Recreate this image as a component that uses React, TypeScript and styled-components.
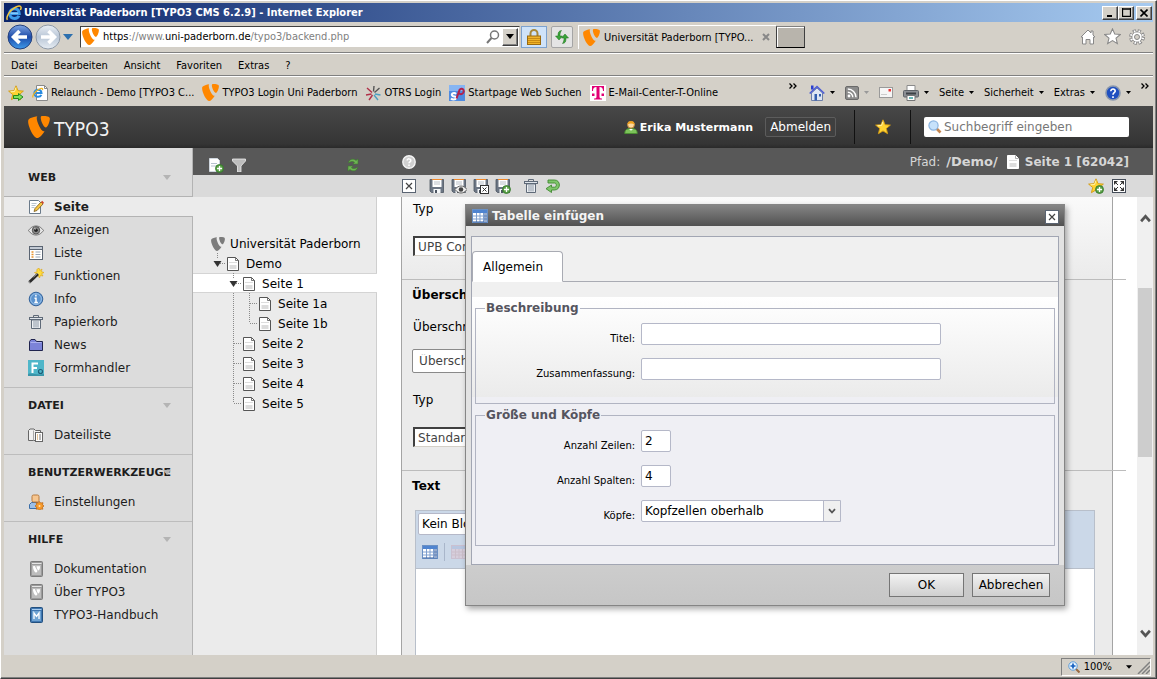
import React from "react";
import styled, { createGlobalStyle, css } from "styled-components";

const ui = `"DejaVu Sans Condensed", "DejaVu Sans", sans-serif`;
const page = `"DejaVu Sans", sans-serif`;

const Global = createGlobalStyle`
  *, *::before, *::after { box-sizing: border-box; }
  body { margin: 0; background: #d4d0c8; font-family: ${page}; font-size: 12px; color: #000; }
  button, input, select { font: inherit; color: inherit; margin: 0; }
  a { color: inherit; text-decoration: none; }
  ul { list-style: none; margin: 0; padding: 0; }
  h1, h2, h3 { margin: 0; font-size: inherit; }
  svg { display: block; flex: none; }
`;

/* ---------- icons ---------- */

const svg = (vb: string, w: number, h: number, body: React.ReactNode) => (
  <svg width={w} height={h} viewBox={vb} fill="none" aria-hidden="true">
    {body}
  </svg>
);

const Typo3Mark = ({ size = 18, color = "#ff8700" }: { size?: number; color?: string }) =>
  svg("0 0 24 24", size, size, (
    <g fill={color}>
      <path d="M18.080 16.539c-.356.105-.64.144-1.012.144-3.048 0-7.524-10.652-7.524-14.197 0-1.305.31-1.740.745-2.114C6.560.808 2.082 2.177.651 3.917c-.31.436-.497 1.120-.497 1.990C.154 11.442 6.060 24 10.228 24c1.928 0 5.178-3.168 7.852-7.460" />
      <path d="M16.134 0c3.855 0 7.713.622 7.713 2.798 0 4.415-2.800 9.765-4.230 9.765-2.549 0-5.720-7.090-5.720-10.635C13.897.31 14.518 0 16.134 0" />
    </g>
  ));

const IeIcon = () =>
  svg("0 0 16 16", 16, 16, (
    <>
      <path d="M4 8.500h9.200C13 5.600 11 3.800 8.500 3.800S3.700 5.700 3.700 8.600s2 4.900 4.800 4.900c2.100 0 3.700-1 4.400-2.700" stroke="#3d9be8" strokeWidth="3" />
      <path d="M4.500 8.200h7.600" stroke="#a8dcff" strokeWidth="1" />
      <path d="M1.500 14.800C-.5 12.500 3.500 5.500 9 2.500c3-1.700 5.600-1.900 6-.4.200.7 0 1.700-.6 2.900" stroke="#f2c53d" strokeWidth="1.500" />
    </>
  ));

const IePage = () =>
  svg("0 0 16 16", 16, 16, (
    <>
      <path d="M4.500.5h8l3 3v12h-11z" fill="#fff" stroke="#8a8a8a" />
      <path d="M12.500.5v3h3" stroke="#8a8a8a" />
      <path d="M2.500 8h7C9.300 6 8 4.800 6 4.800S2.300 6.200 2.300 8.200 4 11.800 6 11.800c1.600 0 2.800-.7 3.300-2" stroke="#2a8be0" strokeWidth="2" />
      <path d="M1 12.500C0 11 3 6.500 6.500 4.500s4.500-1.200 4 .6" stroke="#f2b51d" strokeWidth="1.200" />
    </>
  ));

const NavBubble = ({ back }: { back?: boolean }) =>
  svg("0 0 26 26", 26, 26, (
    <>
      <defs>
        <linearGradient id={back ? "nb" : "nf"} x1="0" y1="0" x2="0" y2="1">
          <stop offset="0" stopColor={back ? "#7fa6e4" : "#e9eef4"} />
          <stop offset=".5" stopColor={back ? "#1d4aa8" : "#b9c6d6"} />
          <stop offset="1" stopColor={back ? "#3f9bea" : "#e7edf3"} />
        </linearGradient>
      </defs>
      <circle cx="13" cy="13" r="12" fill={`url(#${back ? "nb" : "nf"})`} stroke={back ? "#24407c" : "#8f9aa8"} />
      <path
        d={back ? "M12.500 7L6.500 13l6 6M7.500 13H20" : "M13.500 7l6 6-6 6M18.500 13H6"}
        stroke="#fff"
        strokeWidth="3.600"
      />
    </>
  ));

const Caret = ({ color = "#000", w = 5 }: { color?: string; w?: number }) =>
  svg("0 0 10 6", w, Math.round(w * 0.6), <path d="M0 0h10L5 6z" fill={color} />);

const Magnifier = () =>
  svg("0 0 14 14", 14, 14, (
    <>
      <circle cx="8.500" cy="5" r="4" stroke="#777" strokeWidth="1.500" />
      <path d="M5.500 8L1 13" stroke="#777" strokeWidth="2" />
    </>
  ));

const Lock = () =>
  svg("0 0 16 16", 16, 16, (
    <>
      <path d="M4.500 8V4.500a3.500 3.500 0 017 0V8" stroke="#a8883a" strokeWidth="2" />
      <rect x="1.500" y="7" width="13" height="8.500" fill="#f0b429" stroke="#9a6a10" />
      <path d="M2 9.500h12M2 11.500h12M2 13.500h12" stroke="#c98a14" />
    </>
  ));

const ReloadArrows = () =>
  svg("0 0 16 16", 16, 16, (
    <g fill="#3aa53a" stroke="#1d6f1d" strokeWidth=".5">
      <path d="M7.500 1.500C4.500 2 4 3.500 4 7H1.500L5 11l3.500-4H6C6 4.500 6.200 3.500 7.500 1.500z" />
      <path d="M8.500 14.500C11.500 14 12 12.500 12 9h2.500L11 5 7.500 9H10c0 2.500-.2 3.500-1.500 5.500z" />
    </g>
  ));

const House = () =>
  svg("0 0 16 16", 16, 16, (
    <path d="M8 1L1 8h1.500v7H6v-4.500h4V15h3.500V8H15l-2-2V2h-2v2z" fill="#fff" stroke="#888" />
  ));
const starPath = "M8 .8l2.100 4.900 5.300.4-4.100 3.400 1.300 5.200L8 11.900l-4.600 2.800 1.300-5.200L.6 6.100l5.300-.4z";
const StarOutline = () => svg("0 0 16 16", 17, 17, <path d={starPath} fill="#fff" stroke="#888" />);
const Star = ({ add, arrow }: { add?: boolean; arrow?: boolean }) =>
  svg("0 0 16 16", 16, 16, (
    <>
      <path d={starPath} fill="#ffd332" stroke="#d39a12" strokeWidth=".9" />
      <path d="M8 2.500L6.500 6.500l-4 .3" stroke="#fff3b0" />
      {add && <AddBadge />}
      {arrow && <path d="M5.500 10.500h5V8.500L15 12l-4.500 3.500v-2h-5z" fill="#7fe05a" stroke="#238a1b" />}
    </>
  ));
const Gear = () =>
  svg("0 0 16 16", 16, 16, (
    <>
      <circle cx="8" cy="8" r="6.300" stroke="#888" strokeWidth="3.200" strokeDasharray="3.100 1.850" />
      <circle cx="8" cy="8" r="5.200" fill="#fff" stroke="#888" />
      <circle cx="8" cy="8" r="6" stroke="#fff" strokeWidth="2.200" strokeDasharray="1.500 3.220" strokeDashoffset="-.8" />
      <circle cx="8" cy="8" r="2.500" fill="#d4d0c8" stroke="#888" />
    </>
  ));
const AddBadge = () => (
  <>
    <circle cx="11.500" cy="11.500" r="4" fill="#5aa046" stroke="#2f7326" strokeWidth=".8" />
    <path d="M11.500 9v5M9 11.500h5" stroke="#fff" strokeWidth="1.300" />
  </>
);

const Otrs = () =>
  svg("0 0 16 16", 16, 16, (
    <g strokeWidth="1.400">
      <path d="M7 7.500L2 3M6.500 9L1 10M7.500 10L4 15" stroke="#b03048" />
      <path d="M8.500 6.500l.5-5.500M9.500 7.500L14.500 3" stroke="#555" />
      <path d="M10 9l5.500 1M9 10l4 5" stroke="#4b9fc0" />
    </g>
  ));
const Startpage = () =>
  svg("0 0 16 16", 16, 16, (
    <>
      <rect width="16" height="16" fill="#4f8be0" />
      <rect width="16" height="6" fill="#86b5f3" />
      <path d="M7 9C5.500 7.300 2 8.300 3 10.300s4.500.5 4 2.700-4 1.500-5 .5" stroke="#fff" strokeWidth="2" />
      <path d="M7.500 13.500L10.500 5c2.500-3 5.500 0 3.500 3-1.200 1.600-3.500 1.500-4 0" stroke="#b3224b" strokeWidth="2" />
    </>
  ));
const Telekom = () =>
  svg("0 0 16 16", 16, 16, (
    <>
      <rect width="16" height="16" fill="#fff" />
      <path d="M2 1h12v5h-1c0-2.500-1-4-3.500-4v9.500c0 1.500.5 2 2.500 2v1H4v-1c2 0 2.500-.5 2.500-2V2C4 2 3 3.500 3 6H2z" fill="#e20074" />
      <path d="M2 8.500h2.500V11H2zM11.500 8.500H14V11h-2.500z" fill="#e20074" />
    </>
  ));
const HomeBlue = () =>
  svg("0 0 16 16", 16, 16, (
    <>
      <path d="M2.500 8v7.500h11V8L8 3z" fill="#dfe6f3" stroke="#6d7fa8" />
      <path d="M.7 8.500L8 1.500l7.300 7" stroke="#4a5bd6" strokeWidth="1.600" />
      <path d="M2 .5h2.500v4H2z" fill="#2a3fd0" />
      <path d="M5.500 9H8v6.500H5.500z" fill="#355fae" />
      <path d="M10 9h2v2.500h-2z" fill="#355fae" />
    </>
  ));
const Rss = () =>
  svg("0 0 14 14", 14, 14, (
    <>
      <rect x=".5" y=".5" width="13" height="13" rx="1.500" fill="#8b8b8b" stroke="#6a6a6a" />
      <circle cx="4" cy="10" r="1.400" fill="#fff" />
      <path d="M2.800 6.200a5 5 0 015 5M2.800 3a8.200 8.200 0 018.200 8.200" stroke="#fff" strokeWidth="1.400" />
    </>
  ));
const Mail = () =>
  svg("0 0 14 11", 14, 11, (
    <>
      <rect x=".5" y=".5" width="13" height="10" fill="#f6f6f6" stroke="#9a9a9a" />
      <rect x="9.500" y="2" width="2.500" height="2.500" fill="#e33" />
      <path d="M2 7.500h6" stroke="#ccc" />
    </>
  ));
const Printer = () =>
  svg("0 0 16 16", 16, 16, (
    <>
      <path d="M4 .5h8V7H4z" fill="#fff" stroke="#8b8b8b" />
      <rect x=".5" y="5.500" width="15" height="6.500" rx="1" fill="#8c8f94" stroke="#5e6268" />
      <path d="M3 8.500h10" stroke="#3c4046" strokeWidth="2" />
      <path d="M4 10.500h8v5H4z" fill="#fff" stroke="#777" />
      <path d="M6 13h4" stroke="#3aa0a0" strokeWidth="1.500" />
    </>
  ));
const HelpBlue = () =>
  svg("0 0 16 16", 16, 16, (
    <>
      <circle cx="8" cy="8" r="7" fill="#1f4fc0" stroke="#8a97ad" strokeWidth="1.600" />
      <path d="M5.800 6.200c0-3 4.600-2.800 4.400 0C10 7.700 8 7.800 8 9.800M8 11.300v1.600" stroke="#fff" strokeWidth="1.600" />
    </>
  ));
const HelpGrey = () =>
  svg("0 0 14 14", 14, 14, (
    <>
      <circle cx="7" cy="7" r="6.200" fill="#cfcfcf" stroke="#f4f4f4" strokeWidth="1.400" />
      <path d="M5.200 5.600c0-2.400 3.700-2.200 3.600 0C8.700 6.800 7 6.900 7 8.300M7 9.600v1.300" stroke="#fff" strokeWidth="1.500" />
    </>
  ));
const User = () =>
  svg("0 0 14 14", 14, 14, (
    <>
      <path d="M.8 13.500c0-3.500 1.700-5 6.200-5s6.200 1.500 6.200 5z" fill="#7cc35a" stroke="#4c8f33" />
      <path d="M5 9l2 1.800L9 9z" fill="#fff" />
      <circle cx="7" cy="4.700" r="3.400" fill="#ffd9a0" stroke="#c98a3a" />
      <path d="M3.500 4.500C3 0 11 0 10.500 4.500 8.500 3 5.500 3 3.500 4.500z" fill="#f0a11c" />
    </>
  ));
const SearchColor = () =>
  svg("0 0 14 14", 14, 14, (
    <>
      <path d="M8.500 8.500l4 4" stroke="#c48650" strokeWidth="2.600" />
      <circle cx="5.500" cy="5.500" r="4.600" fill="#c7e2fb" stroke="#8bb4e0" strokeWidth="1.200" />
    </>
  ));
const ZoomIn = () =>
  svg("0 0 12 12", 12, 12, (
    <>
      <path d="M7.500 7.500l4 4" stroke="#9a6a40" strokeWidth="2" />
      <circle cx="5" cy="5" r="4.200" fill="#e8f4ff" stroke="#5b9bd8" />
      <path d="M5 2.500v5M2.500 5h5" stroke="#1560c0" strokeWidth="1.700" />
    </>
  ));

const PageSheet = ({ plain, edge = "#555" }: { plain?: boolean; edge?: string }) =>
  svg("0 0 12 14", 12, 14, (
    <>
      <path d="M.5.5h8l3 3v10H.5z" fill="#fff" stroke={plain ? "#fff" : edge} />
      <path d="M8.500.5v3h3" stroke={edge} strokeWidth=".8" />
      <path d="M2.500 5.500h7" stroke="#bbb" strokeDasharray="1 1" />
      <path d="M2.500 8h7v4h-7z" fill="#dcdcdc" />
    </>
  ));
const EditPage = () =>
  svg("0 0 16 16", 16, 16, (
    <>
      <path d="M1.500 1.500h9l2 2v11h-11z" fill="#fff" stroke="#6a7a8a" />
      <path d="M3.500 4.500h5M3.500 6.500h4M3.500 8.500h3" stroke="#b8c4d0" />
      <path d="M6 12.500l1-3 6-6.500 2 2-6 6.500z" fill="#f7c542" stroke="#7a5a1a" strokeWidth=".8" />
      <path d="M13 3l1.200-1.300 1.800 2L15 5z" fill="#d2452d" />
    </>
  ));
const Eye = () =>
  svg("0 0 16 16", 16, 16, (
    <>
      <path d="M.5 8.500C3 5 5.500 4 8 4s5 1 7.500 4.500C13 12 10.500 13 8 13S3 12 .5 8.500z" fill="#e6e6e6" stroke="#707070" />
      <circle cx="8" cy="8.300" r="3.700" fill="#8a8a8a" stroke="#555" />
      <circle cx="8" cy="8.300" r="1.800" fill="#222" />
      <path d="M6.500 6.200l1.200 1" stroke="#fff" />
    </>
  ));
const ListIcon = () =>
  svg("0 0 16 16", 16, 16, (
    <>
      <rect x="1.500" y="1.500" width="13" height="13" fill="#fff" stroke="#5a6472" />
      <path d="M2 3h12" stroke="#c3cad4" strokeWidth="2" />
      <path d="M2 4.500h12" stroke="#5a6472" />
      <path d="M3.500 7h2M3.500 9.500h2M3.500 12h2" stroke="#e8922e" strokeWidth="1.500" />
      <path d="M7.500 7h5M7.500 9.500h5M7.500 12h5" stroke="#9aa6b6" />
    </>
  ));
const Wand = () =>
  svg("0 0 16 16", 16, 16, (
    <>
      <path d="M11 0l.8 2.500L14 1l-.6 2.600L16 4.500l-2.400 1.200L15 8l-2.600-.5L11.500 10l-1.300-2.300L8 8.500l.6-2.500L6.500 4.500 9 4 8.800 1.500z" fill="#ffdc3c" stroke="#d9a318" strokeWidth=".6" />
      <path d="M10 6L1 14.500" stroke="#2b2b2b" strokeWidth="2.800" />
      <path d="M9.500 5.500l-4 3.700" stroke="#aaa" strokeWidth=".8" />
      <path d="M2 14.700L.7 13.300" stroke="#eee" />
    </>
  ));
const Info = () =>
  svg("0 0 16 16", 16, 16, (
    <>
      <circle cx="8" cy="8" r="6.800" fill="#5b93cf" stroke="#34639b" />
      <circle cx="8" cy="8" r="5.400" stroke="#a9cbee" strokeWidth=".8" />
      <path d="M6.500 7.200H8v4M6.300 11.500h3.600M7.900 3.800v1.700" stroke="#fff" strokeWidth="1.500" />
    </>
  ));
const Trash = () =>
  svg("0 0 16 16", 16, 16, (
    <>
      <path d="M5.500 3V1.500h5V3" stroke="#5f6a78" />
      <rect x="1.500" y="3.500" width="13" height="2" fill="#dfe4ea" stroke="#5f6a78" />
      <path d="M3.500 6h9v8.500h-9z" fill="#eef1f4" stroke="#5f6a78" />
      <path d="M6 7v6.500M8 7v6.500M10 7v6.500" stroke="#8c97a5" />
    </>
  ));
const Folder = () =>
  svg("0 0 16 16", 16, 16, (
    <>
      <path d="M1.500 13.500v-9l1.500-2h4l1.500 2h6v9z" fill="#7c83d8" stroke="#20244e" />
      <path d="M2.500 5.500h11" stroke="#aab0ee" />
    </>
  ));
const Formhandler = () =>
  svg("0 0 16 16", 16, 16, (
    <>
      <rect width="16" height="16" fill="#4fb6c9" />
      <path d="M0 14c4-1.500 8 1.500 16 0v2H0z" fill="#3a94a8" />
      <path d="M4.500 13V3.500H10M4.500 8H9" stroke="#fff" strokeWidth="2" />
      <circle cx="12.500" cy="11.500" r="2" stroke="#1f5f78" strokeWidth="1.200" />
    </>
  ));
const FileList = () =>
  svg("0 0 16 16", 16, 16, (
    <>
      <path d="M.5 13.500v-10L2 2h4l1.500 1.500h5v10z" fill="#f1f1f1" stroke="#666" />
      <path d="M5.500 3.500v10" stroke="#aaa" />
      <rect x="7.500" y="5.500" width="7" height="9" fill="#fff" stroke="#666" />
      <path d="M9 8h1M9 10h1M9 12h1" stroke="#c7822a" />
      <path d="M11 8h2M11 10h2M11 12h2" stroke="#777" />
    </>
  ));
const Settings = () =>
  svg("0 0 16 16", 16, 16, (
    <>
      <path d="M1.500 14.500v-4l2-2h6l2 2v4z" fill="#9dbfe6" stroke="#3b6ea8" />
      <rect x="4" y="1" width="7" height="7" rx="1.500" fill="#f6c690" stroke="#b97a3c" />
      <path d="M11.500 7.500l1.200 1.500 2.300-.3-.5 2 1.500 1.300-1.600 1.200.4 2-2.100-.2-1.200 1.500-1.100-1.500-2.200.2.500-2L7 12l1.600-1.300-.4-2 2.200.3z" fill="#f79a2a" stroke="#b8620f" strokeWidth=".7" />
      <circle cx="11.500" cy="12" r="1" fill="#ffe3b8" />
    </>
  ));
const Book = ({ blue }: { blue?: boolean }) =>
  svg("0 0 16 16", 16, 16, (
    <>
      <rect x="2.500" y=".5" width="12" height="15" rx="1" fill={blue ? "#3f76b0" : "#9b9b9b"} stroke={blue ? "#23507f" : "#7c7c7c"} />
      <path d="M4 2.500h9.500" stroke={blue ? "#a9cdf0" : "#e6e6e6"} />
      <rect x="4" y="4" width="9" height="10" fill={blue ? "#6fa3d2" : "#bdbdbd"} />
      {blue ? (
        <path d="M6 12V6l2.500 3.500L11 6v6" stroke="#fff" strokeWidth="1.300" />
      ) : (
        <path d="M5 5.500c1.500-1 2.500 0 2.500 1L9.500 10c-1 2-2 2-3 .5S5 7 5 5.500zM8.500 5.200h3.500c.2 2-.7 4-1.500 4.300-1-.5-2-2.800-2-4.300z" fill="#fff" />
      )}
    </>
  ));
const NewPage = () =>
  svg("0 0 16 16", 16, 16, (
    <>
      <path d="M1.500 1.500h8l2 2v11h-10z" fill="#fff" stroke="#cfd6de" />
      <path d="M3 6.500h6M3 9h5" stroke="#b7c2cf" />
      <AddBadge />
    </>
  ));
const Funnel = () =>
  svg("0 0 14 14", 14, 14, <path d="M.5 1h13v2L9 8v6H5.500V8L.5 3z" fill="#bdbdbd" stroke="#eee" strokeWidth=".8" />);
const RefreshGreen = () =>
  svg("0 0 14 14", 14, 14, (
    <g fill="#6db354" stroke="#3c7d2c" strokeWidth=".6">
      <path d="M2.500 5C3 .5 8 .3 10 2.500l2-1.500V6H7l1.500-1.700C7 3 4.500 3.200 2.500 5z" />
      <path d="M11.500 9c-.5 4.500-5.500 4.700-7.500 2.500L2 13V8h5L5.500 9.700C7 11 9.500 10.800 11.500 9z" />
    </g>
  ));
const BoxX = () =>
  svg("0 0 14 14", 14, 14, (
    <>
      <rect x=".5" y=".5" width="13" height="13" fill="#fff" stroke="#5a6472" />
      <path d="M4 4l6 6M10 4l-6 6" stroke="#444" strokeWidth="1.200" />
    </>
  ));
const Expand = () =>
  svg("0 0 14 14", 14, 14, (
    <>
      <rect x=".5" y=".5" width="13" height="13" fill="#fff" stroke="#444c58" />
      <path d="M2 6V2h4zM8 2h4v4zM12 8v4H8zM6 12H2V8z" fill="#333" />
      <path d="M3 3l3 3M11 3L8 6M11 11L8 8M3 11l3-3" stroke="#333" />
    </>
  ));
const Floppy = ({ kind }: { kind?: "eye" | "close" | "add" }) =>
  svg("0 0 16 16", 16, 16, (
    <>
      <path d="M1 1.500h13.500v13H2.500L1 13z" fill="#6c7684" stroke="#4c5561" strokeWidth=".8" />
      <rect x="3.500" y="1" width="9" height="8" fill="#fff" />
      <path d="M3 1.500h10" stroke="#f0892a" />
      <path d="M5 4h6M5 6h6" stroke="#b9c0c8" />
      <path d="M4.500 11h7v4h-7z" fill="#f4f6f8" />
      <path d="M6 12h2v3H6z" fill="#4c5561" />
      {kind === "eye" && (
        <>
          <path d="M4 11.500C6 8.800 8 8 10 8s4 .8 6 3.500c-2 2.700-4 3.500-6 3.500s-4-.8-6-3.500z" fill="#eee" stroke="#666" />
          <circle cx="10" cy="11.500" r="2.300" fill="#444" />
        </>
      )}
      {kind === "close" && (
        <>
          <rect x="7.500" y="7.500" width="8" height="8" fill="#fff" stroke="#333" />
          <path d="M9.500 9.500l4 4M13.500 9.500l-4 4" stroke="#333" />
        </>
      )}
      {kind === "add" && <AddBadge />}
    </>
  ));
const Undo = () =>
  svg("0 0 16 16", 16, 16, (
    <path d="M3 2h6.500c6.500 0 6.500 10 0 10H6.500v2.500L1 10.700 6.500 7v2.200h3c2.400 0 2.400-4.200 0-4.200H3z" fill="#7fc56a" stroke="#3f8a30" strokeWidth=".9" />
  ));
const TableIcon = ({ faded }: { faded?: boolean }) =>
  svg("0 0 16 14", 16, 14, (
    <g opacity={faded ? 0.3 : 1}>
      <rect x=".5" y=".5" width="15" height="13" fill={faded ? "#f2b8c2" : "#fff"} stroke={faded ? "#c98a9c" : "#6a90c4"} />
      <path d="M1 1h14v3H1z" fill={faded ? "#8f9fd0" : "#4f84d0"} />
      <path d="M1 7h14M1 10h14M4.500 4v9M8 4v9M11.500 4v9" stroke={faded ? "#c88" : "#7f9fce"} />
      {!faded && <path d="M12 4h3v9h-3zM1 12h14v1.500H1z" fill="#3f66a4" opacity=".55" />}
    </g>
  ));
const Chevron = ({ up, small }: { up?: boolean; small?: boolean }) =>
  svg("0 0 10 8", small ? 8 : 11, small ? 6 : 9, <path d={up ? "M1 6.500L5 2l4 4.500" : "M1 1.500L5 6l4-4.500"} stroke="#555" strokeWidth="2.400" />);
const More = () =>
  svg("0 0 8 6", 8, 6, <path d="M.5.5L3 3 .5 5.500M4.500.5L7 3 4.500 5.500" stroke="#000" strokeWidth="1.300" />);

/* ---------- browser frame ---------- */

const Window = styled.div`
  display: flex;
  flex-direction: column;
  min-height: 100vh;
  padding: 2px 2px 0 2px;
  background: #d4d0c8;
  border: 1px solid;
  border-color: #fff #404040 #404040 #fff;
  box-shadow: inset -1px -1px 0 #808080;
  font-family: ${ui};
  font-size: 11px;
`;

const TitleBar = styled.header`
  display: flex;
  align-items: center;
  gap: 2px;
  height: 19px;
  margin: 0 1px;
  padding: 0 1px 0 2px;
  background: linear-gradient(90deg, #0a246a, #a6caf0);
  color: #fff;
  h1 { flex: 1; font-size: 11px; font-weight: bold; }
`;

const raised = css`
  border: 1px solid;
  border-color: #fff #404040 #404040 #fff;
  box-shadow: inset -1px -1px 0 #808080;
  background: #d4d0c8;
`;

const WinButton = styled.button<{ $gap?: boolean }>`
  ${raised}
  display: grid;
  place-items: center;
  width: 16px;
  height: 14px;
  margin-left: ${(p) => (p.$gap ? 0 : -2)}px;
  padding: 0;
`;

const chromeRow = css`
  display: flex;
  align-items: center;
  margin: 0 1px;
  border-bottom: 1px solid #fff;
  box-shadow: inset 0 -1px 0 #808080;
`;

const NavRow = styled.div`
  ${chromeRow}
  height: 32px;
  padding: 0 8px 2px 3px;
`;

const Bubble = styled.button`
  width: 26px;
  height: 26px;
  margin-right: 2px;
  padding: 0;
  border: 0;
  border-radius: 13px;
  background: none;
`;

const PlainButton = styled.button`
  display: inline-flex;
  align-items: center;
  gap: 5px;
  padding: 0;
  border: 0;
  background: none;
  white-space: nowrap;
`;

const Address = styled.div`
  display: flex;
  align-items: center;
  flex: 0 1 440px;
  height: 22px;
  margin-left: 7px;
  padding: 0 1px 0 1px;
  background: #fff;
  border: 1px solid;
  border-color: #404040 #d4d0c8 #d4d0c8 #404040;
`;
const Url = styled.div`
  flex: 1;
  margin-left: 4px;
  color: #808080;
  b { font-weight: normal; color: #000; }
`;
const DropButton = styled.button`
  ${raised}
  display: grid;
  place-items: center;
  width: 16px;
  height: 18px;
  margin-left: 2px;
  padding: 0;
`;
const SquareButton = styled.button<{ $blue?: boolean }>`
  display: grid;
  place-items: center;
  width: ${(p) => (p.$blue ? 26 : 22)}px;
  height: 22px;
  margin-left: ${(p) => (p.$blue ? 1 : 4)}px;
  padding: 0;
  border: 1px solid ${(p) => (p.$blue ? "#7da2ce" : "#a5a5a5")};
  border-radius: ${(p) => (p.$blue ? 0 : 2)}px;
  background: ${(p) => (p.$blue ? "#cfe3f9" : "#e4e4e4")};
`;
const Tab = styled.div`
  display: flex;
  align-items: center;
  gap: 4px;
  flex: 0 1 198px;
  height: 24px;
  margin-left: 5px;
  padding: 0 6px 0 4px;
  border-left: 1px solid #fff;
  border-top: 1px solid #fff;
  white-space: nowrap;
  span { flex: 1; }
`;
const NewTab = styled.button`
  width: 29px;
  height: 22px;
  border: 1px solid;
  border-color: #808080 #404040 #000 #404040;
  box-shadow: inset 1px 1px 0 #fff;
  background: #b8b4ac;
`;
const Tools = styled.div<{ $gap: number }>`
  display: flex;
  align-items: center;
  align-self: stretch;
  gap: ${(p) => p.$gap}px;
  margin-left: auto;
`;

const MenuRow = styled.nav`
  ${chromeRow}
  height: 23px;
  gap: 16px;
  padding: 0 7px 0 7px;
`;

const LinksRow = styled.div`
  display: flex;
  align-items: center;
  height: 29px;
  margin: 0 1px;
  padding: 2px 2px 0 4px;
`;
const Bookmark = styled.a`
  display: flex;
  align-items: center;
  gap: 3px;
  margin-left: 8px;
  white-space: nowrap;
`;
const MoreMark = styled.button`
  align-self: flex-start;
  margin: 4px 2px 0 0;
  padding: 0;
  border: 0;
  background: none;
`;

const StatusBar = styled.footer`
  display: flex;
  justify-content: flex-end;
  align-items: center;
  height: 23px;
  margin-right: 3px;
`;
const ZoomBox = styled.div`
  display: flex;
  align-items: center;
  gap: 4px;
  height: 18px;
  padding: 0 0 0 6px;
  border: 1px solid;
  border-color: #808080 #fff #fff #808080;
  span { margin-right: 10px; }
`;

/* ---------- backend ---------- */

const Backend = styled.div`
  display: flex;
  flex-direction: column;
  flex: 1;
  margin: 0 1px;
  font-family: ${page};
  font-size: 12px;
`;

const TopBar = styled.header`
  display: flex;
  align-items: center;
  height: 42px;
  padding: 0 24px;
  background: linear-gradient(#484848, #353535 90%, #2a2a2a);
  color: #fff;
`;
const Logo = styled.div`
  display: flex;
  align-items: center;
  gap: 4px;
  margin-right: auto;
  font: 19px ${ui};
  color: #f2f2f2;
  span { padding-top: 3px; }
`;
const UserName = styled.strong`
  display: flex;
  align-items: center;
  gap: 2px;
  font-size: 11px;
`;
const Logout = styled.button`
  height: 20px;
  margin-left: 12px;
  padding: 0 4px;
  border: 1px solid #5c5c5c;
  border-radius: 2px;
  background: #3f3f3f;
  color: #fff;
`;
const Favs = styled.button`
  display: grid;
  place-items: center;
  width: 57px;
  height: 34px;
  margin: 0 13px 0 18px;
  border: solid #111;
  border-width: 0 1px;
  background: none;
`;
const Search = styled.label`
  display: flex;
  align-items: center;
  gap: 2px;
  width: 205px;
  height: 20px;
  padding-left: 4px;
  border-radius: 2px;
  background: #fff;
  input {
    flex: 1;
    min-width: 0;
    padding: 0;
    border: 0;
    outline: 0;
    background: none;
  }
  input::placeholder { color: #777; opacity: 1; }
`;

const Columns = styled.div`
  display: flex;
  flex: 1;
`;

const Modules = styled.nav`
  flex: 0 0 189px;
  padding-top: 12px;
  background: #dcdcdc;
  border-right: 1px solid #b3b3b3;
  color: #1d1d1d;
`;
const ModuleGroup = styled.section`
  padding-bottom: 8px;
  & + & { border-top: 1px solid #bdbdbd; }
  &:last-child { padding-bottom: 0; }
`;
const GroupTitle = styled.h2`
  display: flex;
  align-items: center;
  justify-content: space-between;
  height: 35px;
  padding: 0 21px 0 24px;
  font-size: 11px;
  svg { margin-left: -8px; }
`;
const ModuleItem = styled.a<{ $active?: boolean }>`
  display: flex;
  align-items: center;
  gap: 10px;
  height: 23px;
  padding-left: 24px;
  ${(p) =>
    p.$active &&
    css`
      height: 21px;
      margin: 1px -1px 1px 0;
      border: solid #b3b3b3;
      border-width: 1px 0;
      background: #ebebeb;
      font-weight: bold;
    `}
`;

const Main = styled.main`
  display: flex;
  flex-direction: column;
  flex: 1;
  min-width: 0;
`;
const DarkBar = styled.div`
  display: flex;
  align-items: center;
  height: 27px;
  background: #585858;
  color: #d6d6d6;
`;
const DocTools = styled.div`
  display: flex;
  align-items: center;
  height: 22px;
  padding: 0 27px 0 209px;
  background: #dadada;
`;
const IconButton = styled.button<{ $before?: number }>`
  display: grid;
  place-items: center;
  margin-left: ${(p) => p.$before ?? 6}px;
  padding: 0;
  border: 0;
  background: none;
`;
const TreeTools = styled.div`
  display: flex;
  align-items: center;
  flex: 0 0 208px;
  padding: 7px 41px 0 15px;
  button:last-child { margin-left: auto; }
`;
const DocPath = styled.div`
  display: flex;
  align-items: center;
  gap: 6px;
  margin-left: auto;
  padding-right: 24px;
`;
const PathFolder = styled.strong`
  margin-right: 3px;
  font-size: 13px;
`;
const Panes = styled.div`
  display: flex;
  flex: 1;
  background: #fff;
`;

const TreePane = styled.aside`
  flex: 0 0 184px;
  padding-top: 36px;
  background: #ebebeb;
  border-right: 1px solid #cfcfcf;
`;
const TreeRow = styled.li<{ $active?: boolean }>`
  display: flex;
  align-items: center;
  height: 20px;
  padding-left: 16px;
  ${(p) =>
    p.$active &&
    css`
      margin-right: -1px;
      background: #fff;
      box-shadow: inset 0 1px 0 #d4d4d4, inset 0 -1px 0 #d4d4d4;
    `}
`;
const TreeLabel = styled.a<{ $root?: boolean }>`
  display: flex;
  align-items: center;
  gap: ${(p) => (p.$root ? 5 : 7)}px;
  margin-left: 2px;
  padding-top: 2px;
`;

type Guide = "none" | "line" | "tee" | "end" | "open";
const TreeGuide = ({ kind }: { kind: Guide }) =>
  svg("0 0 16 20", 16, 20, (
    <g stroke="#8a8a8a" strokeDasharray="1 1">
      {kind !== "none" && <path d={kind === "end" ? "M8.500 0v10" : kind === "open" ? "M8.500 0v6" : "M8.500 0v20"} />}
      {kind !== "none" && kind !== "line" && <path d="M9 10.500h8" />}
      {kind === "open" && <path d="M4.500 8h8l-4 6z" fill="#333" stroke="none" />}
    </g>
  ));

const Document = styled.div`
  position: relative;
  display: flex;
  flex: 1;
  min-width: 0;
  margin-left: 24px;
`;
const Panel = styled.div`
  display: flex;
  flex-direction: column;
  flex: 1;
  min-width: 0;
  margin-right: 24px;
  background: linear-gradient(#fafafa, #ebebeb 80px);
  border: solid #a4a4a4;
  border-width: 0 1px;
`;
const Section = styled.section<{ $grow?: boolean }>`
  display: flex;
  flex-direction: column;
  align-items: flex-start;
  flex: ${(p) => (p.$grow ? 1 : "none")};
  margin-right: -14px;
  padding: 0 31px 0 10px;
  border-bottom: ${(p) => (p.$grow ? 0 : 1)}px solid #bcbcbc;
`;
const SectionTitle = styled.h3`
  height: 31px;
  margin-bottom: 4px;
  line-height: 31px;
`;
const FieldLabel = styled.label`
  height: 24px;
  padding-left: 1px;
  line-height: 24px;
`;
const SunkenSelect = styled.select`
  appearance: none;
  width: 240px;
  height: 20px;
  margin: 15px 0 23px 1px;
  padding: 0 3px;
  border: solid;
  border-width: 2px 1px 1px 2px;
  border-color: #404040 #d4d0c8 #d4d0c8 #404040;
  border-radius: 0;
  background: #fff;
  color: #444;
`;
const HeadingInput = styled.input`
  width: 420px;
  height: 24px;
  margin: 10px 0 15px;
  padding: 0 6px;
  border: 1px solid #8a8a8a;
  border-radius: 2px;
  background: #fff;
  color: #444;
`;
const Editor = styled.div`
  display: flex;
  flex-direction: column;
  align-self: stretch;
  flex: 1;
  margin: 4px 0 0 3px;
  border: solid #b8bfca;
  border-width: 1px 1px 0;
  background: #fff;
`;
const EditorTools = styled.div`
  padding: 2px;
  height: 58px;
  background: #cbd8e8;
  border-bottom: 1px solid #b8bfca;
`;
const BlockSelect = styled.select`
  appearance: none;
  display: block;
  width: 160px;
  height: 22px;
  padding: 0 3px;
  border: 1px solid #b5b8c8;
  border-radius: 2px;
  background: #fff;
`;
const ToolLine = styled.div`
  display: flex;
  align-items: center;
  gap: 6px;
  height: 33px;
  padding-left: 4px;
`;
const ToolSep = styled.i`
  width: 1px;
  height: 18px;
  background: #a9b6ca;
`;

const ScrollTrack = styled.div`
  display: flex;
  flex-direction: column;
  align-items: center;
  flex: 0 0 16px;
  padding: 17px 0;
  background: #f0f0f0;
`;
const Thumb = styled.div`
  width: 14px;
  flex: 0 1 169px;
  margin: 65px 0 auto;
  background: #cdcdcd;
`;

/* ---------- dialog ---------- */

const Dialog = styled.div`
  position: absolute;
  top: 7px;
  left: 64px;
  right: 88px;
  border: 1px solid #858585;
  background: #e2e2e2;
  box-shadow: 2px 3px 6px rgba(0, 0, 0, 0.35);
`;
const DialogTitle = styled.header`
  display: flex;
  align-items: center;
  gap: 4px;
  height: 21px;
  padding: 0 5px 0 6px;
  background: linear-gradient(#858585, #515151);
  color: #f4f4f4;
  h2 { flex: 1; }
  button { margin-top: 3px; }
`;
const DialogBody = styled.div`
  margin: 10px 5px 0;
  border: 1px solid #a2a6b3;
  background: #f0f0f0;
`;
const TabStrip = styled.div`
  display: flex;
  height: 45px;
  padding-top: 14px;
  border-bottom: 1px solid #a9abb3;
`;
const DialogTab = styled.button`
  width: 91px;
  height: 31px;
  padding: 0 10px;
  border: 1px solid #a9abb3;
  border-bottom-color: #fff;
  border-radius: 4px 4px 0 0;
  background: #fff;
  text-align: left;
`;
const TabPage = styled.form`
  margin-top: 15px;
  padding: 4px 3px 18px;
  background: linear-gradient(#fff, #ebebeb 100px, #efeff4 100px);
`;
const Group = styled.fieldset`
  margin: 0 0 4px;
  padding: 7px 0 23px;
  min-width: 0;
  border: 1px solid #b1b4c2;
  &:last-child { margin: 0; }
  legend {
    margin-left: 9px;
    padding: 0 1px;
    line-height: 15px;
    font-weight: bold;
    color: #55555f;
  }
`;
const FormRow = styled.div`
  display: flex;
  align-items: center;
  & + & { margin-top: 13px; }
  label {
    width: 159px;
    margin-right: 6px;
    padding-top: 9px;
    line-height: 13px;
    font-size: 10px;
    text-align: right;
  }
`;
const TextBox = styled.input<{ $w: number }>`
  width: ${(p) => p.$w}px;
  height: 22px;
  padding: 0 3px;
  border: 1px solid #b5b8c8;
  border-radius: 2px;
  background: #fff;
`;
const Combo = styled.span`
  position: relative;
  display: block;
  select {
    appearance: none;
    display: block;
    width: 200px;
    height: 22px;
    padding: 0 20px 0 3px;
    border: 1px solid #b5b8c8;
    border-radius: 2px 0 0 2px;
    background: #fff;
  }
  i {
    position: absolute;
    inset: 1px 1px 1px auto;
    display: grid;
    place-items: center;
    width: 17px;
    border-left: 1px solid #b5b8c8;
    background: #f0f0f0;
    pointer-events: none;
  }
`;
const DialogFooter = styled.footer`
  display: flex;
  justify-content: flex-end;
  gap: 8px;
  height: 40px;
  padding: 8px 14px;
  background: linear-gradient(#cdcdcd, #c6c6c6);
`;
const PushButton = styled.button<{ $w: number }>`
  width: ${(p) => p.$w}px;
  height: 24px;
  padding: 0;
  border: 1px solid #757575;
  background: linear-gradient(#f2f2f2, #cfcfcf);
`;

/* ---------- data ---------- */

const groups: { title: string; items: [string, React.ReactNode][] }[] = [
  {
    title: "WEB",
    items: [
      ["Seite", <EditPage />],
      ["Anzeigen", <Eye />],
      ["Liste", <ListIcon />],
      ["Funktionen", <Wand />],
      ["Info", <Info />],
      ["Papierkorb", <Trash />],
      ["News", <Folder />],
      ["Formhandler", <Formhandler />],
    ],
  },
  { title: "DATEI", items: [["Dateiliste", <FileList />]] },
  { title: "BENUTZERWERKZEUGE", items: [["Einstellungen", <Settings />]] },
  {
    title: "HILFE",
    items: [
      ["Dokumentation", <Book />],
      ["Über TYPO3", <Book />],
      ["TYPO3-Handbuch", <Book blue />],
    ],
  },
];

const tree: { label: string; guides: Guide[] }[] = [
  { label: "Demo", guides: ["open"] },
  { label: "Seite 1", guides: ["none", "open"] },
  { label: "Seite 1a", guides: ["none", "line", "tee"] },
  { label: "Seite 1b", guides: ["none", "line", "end"] },
  { label: "Seite 2", guides: ["none", "tee"] },
  { label: "Seite 3", guides: ["none", "tee"] },
  { label: "Seite 4", guides: ["none", "tee"] },
  { label: "Seite 5", guides: ["none", "end"] },
];

const bookmarks: [string, React.ReactNode][] = [
  ["Relaunch - Demo [TYPO3 C...", <IePage />],
  ["TYPO3 Login Uni Paderborn", <Typo3Mark size={17} />],
  ["OTRS  Login", <Otrs />],
  ["Startpage Web Suchen", <Startpage />],
  ["E-Mail-Center-T-Online", <Telekom />],
];

export default function App() {
  return (
    <>
      <Global />
      <Window>
        <TitleBar>
          <IeIcon />
          <h1>Universität Paderborn [TYPO3 CMS 6.2.9] - Internet Explorer</h1>
          <WinButton aria-label="Minimieren">{svg("0 0 8 8", 8, 8, <path d="M1 7h5" stroke="#000" strokeWidth="2" />)}</WinButton>
          <WinButton aria-label="Maximieren">
            {svg("0 0 9 9", 9, 9, <path d="M.5 1h8M.5 0v8.500h8V0" stroke="#000" strokeWidth="1.300" />)}
          </WinButton>
          <WinButton $gap aria-label="Schließen">{svg("0 0 8 8", 8, 8, <path d="M.5.5l7 7M7.500.5l-7 7" stroke="#000" strokeWidth="1.600" />)}</WinButton>
        </TitleBar>

        <NavRow>
          <Bubble aria-label="Zurück"><NavBubble back /></Bubble>
          <Bubble aria-label="Vorwärts"><NavBubble /></Bubble>
          <PlainButton aria-label="Verlauf"><Caret w={10} color="#2c6fae" /></PlainButton>
          <Address>
            <Typo3Mark size={17} />
            <Url role="textbox" aria-label="Adresse"><b>https</b>://www.<b>uni-paderborn.de</b>/typo3/backend.php</Url>
            <Magnifier />
            <DropButton aria-label="Adressliste"><Caret w={8} /></DropButton>
          </Address>
          <SquareButton $blue aria-label="Sicherheitsbericht"><Lock /></SquareButton>
          <SquareButton aria-label="Aktualisieren"><ReloadArrows /></SquareButton>
          <Tab>
            <Typo3Mark size={17} />
            <span>Universität Paderborn [TYPO...</span>
            {svg("0 0 8 8", 8, 8, <path d="M1 1l6 6M7 1L1 7" stroke="#888" strokeWidth="2" />)}
          </Tab>
          <NewTab aria-label="Neuer Tab" />
          <Tools $gap={8}>
            <House />
            <StarOutline />
            <Gear />
          </Tools>
        </NavRow>

        <MenuRow>
          {["Datei", "Bearbeiten", "Ansicht", "Favoriten", "Extras", "?"].map((m) => (
            <PlainButton key={m}>{m}</PlainButton>
          ))}
        </MenuRow>

        <LinksRow>
          <Star arrow />
          {bookmarks.map(([label, icon]) => (
            <Bookmark key={label} href="#">{icon}{label}</Bookmark>
          ))}
          <Tools $gap={10}>
            <MoreMark aria-label="Weitere Links"><More /></MoreMark>
            <PlainButton aria-label="Startseite"><HomeBlue /><Caret /></PlainButton>
            <PlainButton aria-label="Feeds"><Rss /><Caret color="#999" /></PlainButton>
            <PlainButton aria-label="E-Mail"><Mail /></PlainButton>
            <PlainButton aria-label="Drucken"><Printer /><Caret /></PlainButton>
            <PlainButton>Seite<Caret /></PlainButton>
            <PlainButton>Sicherheit<Caret /></PlainButton>
            <PlainButton>Extras<Caret /></PlainButton>
            <PlainButton aria-label="Hilfe"><HelpBlue /><Caret /></PlainButton>
            <MoreMark aria-label="Weitere Befehle"><More /></MoreMark>
          </Tools>
        </LinksRow>

        <Backend>
          <TopBar>
            <Logo><Typo3Mark size={22} /><span>TYPO3</span></Logo>
            <UserName><User />Erika Mustermann</UserName>
            <Logout>Abmelden</Logout>
            <Favs aria-label="Lesezeichen"><Star /></Favs>
            <Search>
              <SearchColor />
              <input type="text" placeholder="Suchbegriff eingeben" aria-label="Suchbegriff" />
            </Search>
          </TopBar>

          <Columns>
            <Modules>
              {groups.map((g) => (
                <ModuleGroup key={g.title}>
                  <GroupTitle>{g.title}<Caret w={8} color="#b4b4b4" /></GroupTitle>
                  {g.items.map(([label, icon]) => (
                    <ModuleItem key={label} href="#" $active={label === "Seite"}>{icon}{label}</ModuleItem>
                  ))}
                </ModuleGroup>
              ))}
            </Modules>

            <Main>
              <DarkBar>
                <TreeTools>
                  <IconButton $before={0} aria-label="Neue Seite"><NewPage /></IconButton>
                  <IconButton $before={8} aria-label="Filter"><Funnel /></IconButton>
                  <IconButton aria-label="Baum aktualisieren"><RefreshGreen /></IconButton>
                </TreeTools>
                <IconButton $before={1} aria-label="Hilfe"><HelpGrey /></IconButton>
                <DocPath>
                  <span>Pfad:</span>
                  <PathFolder>/Demo/</PathFolder>
                  <PageSheet plain edge="#999" />
                  <strong>Seite 1 [62042]</strong>
                </DocPath>
              </DarkBar>
              <DocTools>
                <IconButton $before={0} aria-label="Schließen"><BoxX /></IconButton>
                <IconButton $before={13} aria-label="Speichern"><Floppy /></IconButton>
                <IconButton aria-label="Speichern und anzeigen"><Floppy kind="eye" /></IconButton>
                <IconButton aria-label="Speichern und schließen"><Floppy kind="close" /></IconButton>
                <IconButton aria-label="Speichern und neu"><Floppy kind="add" /></IconButton>
                <IconButton $before={12} aria-label="Löschen"><Trash /></IconButton>
                <IconButton aria-label="Rückgängig"><Undo /></IconButton>
                <Tools $gap={2}>
                  <IconButton $before={0} aria-label="Lesezeichen anlegen"><Star add /></IconButton>
                  <IconButton aria-label="Vollbild"><Expand /></IconButton>
                </Tools>
              </DocTools>

              <Panes>
                <TreePane>
                  <ul>
                    <TreeRow><TreeLabel $root href="#"><Typo3Mark size={14} color="#7c7c7c" />Universität Paderborn</TreeLabel></TreeRow>
                    {tree.map((n) => (
                      <TreeRow key={n.label} $active={n.label === "Seite 1"}>
                        {n.guides.map((g, i) => <TreeGuide key={i} kind={g} />)}
                        <TreeLabel href="#"><PageSheet />{n.label}</TreeLabel>
                      </TreeRow>
                    ))}
                  </ul>
                </TreePane>

                <Document>
                  <Panel>
                    <Section>
                      <FieldLabel htmlFor="ctype">Typ</FieldLabel>
                      <SunkenSelect id="ctype"><option>UPB Content</option></SunkenSelect>
                    </Section>
                    <Section>
                      <SectionTitle>Überschriften</SectionTitle>
                      <FieldLabel htmlFor="heading">Überschrift</FieldLabel>
                      <HeadingInput id="heading" defaultValue="Überschrift" />
                      <FieldLabel htmlFor="htype">Typ</FieldLabel>
                      <SunkenSelect id="htype"><option>Standard</option></SunkenSelect>
                    </Section>
                    <Section $grow>
                      <SectionTitle>Text</SectionTitle>
                      <Editor>
                        <EditorTools>
                          <BlockSelect aria-label="Blockstil"><option>Kein Blockstil</option></BlockSelect>
                          <ToolLine><TableIcon /><ToolSep /><TableIcon faded /></ToolLine>
                        </EditorTools>
                      </Editor>
                    </Section>
                  </Panel>
                  <ScrollTrack><Chevron up /><Thumb /><Chevron /></ScrollTrack>

                  <Dialog role="dialog" aria-labelledby="dlg-title">
                    <DialogTitle>
                      <TableIcon />
                      <h2 id="dlg-title">Tabelle einfügen</h2>
                      <IconButton $before={0} aria-label="Dialog schließen"><BoxX /></IconButton>
                    </DialogTitle>
                    <DialogBody>
                      <TabStrip><DialogTab type="button">Allgemein</DialogTab></TabStrip>
                      <TabPage>
                        <Group>
                          <legend>Beschreibung</legend>
                          <FormRow><label htmlFor="t">Titel:</label><TextBox id="t" $w={300} /></FormRow>
                          <FormRow><label htmlFor="z">Zusammenfassung:</label><TextBox id="z" $w={300} /></FormRow>
                        </Group>
                        <Group>
                          <legend>Größe und Köpfe</legend>
                          <FormRow><label htmlFor="r">Anzahl Zeilen:</label><TextBox id="r" $w={30} defaultValue="2" /></FormRow>
                          <FormRow><label htmlFor="c">Anzahl Spalten:</label><TextBox id="c" $w={30} defaultValue="4" /></FormRow>
                          <FormRow>
                            <label htmlFor="k">Köpfe:</label>
                            <Combo>
                              <select id="k"><option>Kopfzellen oberhalb</option></select>
                              <i><Chevron small /></i>
                            </Combo>
                          </FormRow>
                        </Group>
                      </TabPage>
                    </DialogBody>
                    <DialogFooter>
                      <PushButton $w={75}>OK</PushButton>
                      <PushButton $w={78}>Abbrechen</PushButton>
                    </DialogFooter>
                  </Dialog>
                </Document>
              </Panes>
            </Main>
          </Columns>
        </Backend>

        <StatusBar>
          <ZoomBox><ZoomIn /><span>100%</span><Caret w={6} />
            {svg("0 0 14 14", 14, 14, <path d="M2 14L14 2M6 14l8-8M10 14l4-4" stroke="#808080" strokeWidth="1.500" />)}
          </ZoomBox>
        </StatusBar>
      </Window>
    </>
  );
}
